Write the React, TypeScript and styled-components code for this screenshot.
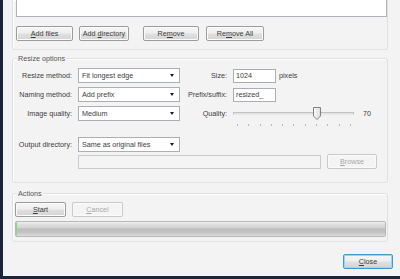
import styled, { createGlobalStyle } from "styled-components";

const GlobalStyle = createGlobalStyle`
  html, body {
    margin: 0;
    padding: 0;
    background: #f3f3f3;
  }
  * {
    box-sizing: border-box;
  }
`;

const Window = styled.div`
  width: 400px;
  height: 279px;
  overflow: hidden;
  background: #f3f3f3;
  border-left: 3px solid #1b2539;
  border-bottom: 3px solid #1b2539;
  font-family: "Liberation Sans", Arial, sans-serif;
  font-size: 7.2px;
  color: #3c3c3c;
  display: flex;
  flex-direction: column;
`;

const Group = styled.div<{ $top?: number; $noTop?: boolean }>`
  position: relative;
  margin-left: 9px;
  margin-top: ${({ $top }) => $top ?? 0}px;
  width: 376px;
  border: 1px solid #dde1e3;
  border-top: ${({ $noTop }) => ($noTop ? "none" : "1px solid #dde1e3")};
  border-radius: ${({ $noTop }) => ($noTop ? "0 0 3px 3px" : "3px")};
  box-shadow: inset 1px 1px 0 #ffffff;
`;

const GroupTitle = styled.span`
  position: absolute;
  left: 4px;
  top: -5px;
  padding: 0 1px;
  background: #f3f3f3;
  line-height: 9px;
  color: #555555;
`;

const FileList = styled.div`
  margin-left: 3px;
  width: 371px;
  height: 17px;
  background: #ffffff;
  border: 1px solid #b0b3b9;
  border-top: none;
`;

const ButtonRow = styled.div<{ $top: number; $left: number }>`
  display: flex;
  align-items: center;
  margin-top: ${({ $top }) => $top}px;
  margin-left: ${({ $left }) => $left}px;
`;

const Button = styled.div<{ $w: number; $gap?: number; $disabled?: boolean; $default?: boolean }>`
  width: ${({ $w }) => $w}px;
  height: 15px;
  margin-left: ${({ $gap }) => $gap ?? 0}px;
  display: flex;
  align-items: center;
  justify-content: center;
  border-radius: 2px;
  border: 1px solid
    ${({ $disabled, $default }) => ($disabled ? "#c6cacd" : $default ? "#3c9ad0" : "#9c9c9c")};
  background: ${({ $disabled }) =>
    $disabled
      ? "#f4f4f4"
      : "linear-gradient(#f6f6f6 0%, #eeeeee 48%, #e0e0e0 52%, #d4d4d4 100%)"};
  box-shadow: ${({ $default }) =>
    $default ? "inset 0 0 0 1px #9ad6f2" : "inset 0 0 0 1px #fbfbfb"};
  color: ${({ $disabled }) => ($disabled ? "#a8a8a8" : "#3c3c3c")};
  flex-shrink: 0;
`;

const Row = styled.div<{ $top: number }>`
  display: flex;
  align-items: center;
  height: 15px;
  margin-top: ${({ $top }) => $top}px;
`;

const Label = styled.div<{ $w: number; $after: number }>`
  width: ${({ $w }) => $w}px;
  margin-right: ${({ $after }) => $after}px;
  text-align: right;
  white-space: nowrap;
  flex-shrink: 0;
`;

const Combo = styled.div`
  position: relative;
  width: 102px;
  height: 15px;
  background: #ffffff;
  border: 1px solid #abafb5;
  padding-left: 3px;
  display: flex;
  align-items: center;
  flex-shrink: 0;

  &::after {
    content: "";
    position: absolute;
    right: 5px;
    top: 5px;
    border-left: 2.5px solid transparent;
    border-right: 2.5px solid transparent;
    border-top: 3px solid #1a1a1a;
  }
`;

const TextBox = styled.div<{ $w: number; $disabled?: boolean }>`
  width: ${({ $w }) => $w}px;
  height: 14px;
  background: ${({ $disabled }) => ($disabled ? "#f4f4f4" : "#ffffff")};
  border: 1px solid ${({ $disabled }) => ($disabled ? "#c8cbce" : "#abafb5")};
  padding-left: 2px;
  display: flex;
  align-items: center;
  flex-shrink: 0;
`;

const Unit = styled.span`
  margin-left: 3px;
`;

const SliderBox = styled.div`
  position: relative;
  width: 121px;
  height: 15px;
  flex-shrink: 0;
`;

const Track = styled.div`
  position: absolute;
  left: 0;
  right: 0;
  top: 6px;
  height: 3px;
  border: 1px solid #c0c0c0;
  border-bottom-color: #e8e8e8;
  background: #e4e4e4;
  border-radius: 1px;
`;

const Ticks = styled.div`
  position: absolute;
  left: 4px;
  right: 3px;
  top: 18px;
  display: flex;
  justify-content: space-between;
`;

const Tick = styled.div`
  width: 1px;
  height: 2px;
  background: #b8b8b8;
`;

const Thumb = styled.svg`
  position: absolute;
  top: 1px;
`;

const Value = styled.span`
  margin-left: 9px;
`;

const Progress = styled.div`
  margin-left: 2px;
  margin-top: 4px;
  width: 371px;
  height: 16px;
  border: 1px solid #b8b8b8;
  border-radius: 2px;
  background: linear-gradient(
    #f0f0f0 0%,
    #dedede 18%,
    #d2d2d2 42%,
    #bcbcbc 50%,
    #c4c4c4 75%,
    #dcdcdc 100%
  );
  box-shadow: inset 1px 0 0 #86dc86;
`;

const Footer = styled.div`
  display: flex;
  justify-content: flex-end;
  margin-top: 12px;
  padding-right: 7px;
`;

function SliderThumb({ x }: { x: number }) {
  return (
    <Thumb width="8" height="13" viewBox="0 0 8 13" style={{ left: x }}>
      <defs>
        <linearGradient id="tg" x1="0" y1="0" x2="1" y2="0">
          <stop offset="0" stopColor="#fbfbfb" />
          <stop offset="1" stopColor="#dcdcdc" />
        </linearGradient>
      </defs>
      <path d="M0.5 0.5 H7.5 V9 L4 12.5 L0.5 9 Z" fill="url(#tg)" stroke="#808080" />
    </Thumb>
  );
}

export default function App() {
  const ticks = Array.from({ length: 11 });
  return (
    <>
      <GlobalStyle />
      <Window>
        <Group $noTop>
          <FileList />
          <ButtonRow $top={9} $left={3}>
            <Button $w={57}>
              <span>
                <u>A</u>dd files
              </span>
            </Button>
            <Button $w={50} $gap={6}>
              <span>
                Add <u>d</u>irectory
              </span>
            </Button>
            <Button $w={56} $gap={14}>
              <span>
                Re<u>m</u>ove
              </span>
            </Button>
            <Button $w={58} $gap={7}>
              <span>
                Re<u>m</u>ove All
              </span>
            </Button>
          </ButtonRow>
          <div style={{ height: 8 }} />
        </Group>

        <Group $top={8}>
          <GroupTitle>Resize options</GroupTitle>
          <Row $top={9}>
            <Label $w={59} $after={6}>Resize method:</Label>
            <Combo>Fit longest edge</Combo>
            <Label $w={47} $after={6}>Size:</Label>
            <TextBox $w={43}>1024</TextBox>
            <Unit>pixels</Unit>
          </Row>
          <Row $top={4}>
            <Label $w={59} $after={6}>Naming method:</Label>
            <Combo>Add prefix</Combo>
            <Label $w={47} $after={6}>Prefix/suffix:</Label>
            <TextBox $w={43}>resized_</TextBox>
          </Row>
          <Row $top={4}>
            <Label $w={59} $after={6}>Image quality:</Label>
            <Combo>Medium</Combo>
            <Label $w={47} $after={6}>Quality:</Label>
            <SliderBox>
              <Track />
              <Ticks>
                {ticks.map((_, i) => (
                  <Tick key={i} />
                ))}
              </Ticks>
              <SliderThumb x={80} />
            </SliderBox>
            <Value>70</Value>
          </Row>
          <Row $top={16}>
            <Label $w={59} $after={6}>Output directory:</Label>
            <Combo>Same as original files</Combo>
          </Row>
          <Row $top={2}>
            <Label $w={59} $after={6} />
            <TextBox $w={243} $disabled />
            <Button $w={50} $gap={6} $disabled>
              <span>
                <u>B</u>rowse
              </span>
            </Button>
          </Row>
          <div style={{ height: 13 }} />
        </Group>

        <Group $top={10}>
          <GroupTitle>Actions</GroupTitle>
          <ButtonRow $top={8} $left={2}>
            <Button $w={51}>
              <span>
                <u>S</u>tart
              </span>
            </Button>
            <Button $w={51} $gap={6} $disabled>
              <span>
                <u>C</u>ancel
              </span>
            </Button>
          </ButtonRow>
          <Progress />
          <div style={{ height: 4 }} />
        </Group>

        <Footer>
          <Button $w={50} $default>
            <span>
              <u>C</u>lose
            </span>
          </Button>
        </Footer>
      </Window>
    </>
  );
}
